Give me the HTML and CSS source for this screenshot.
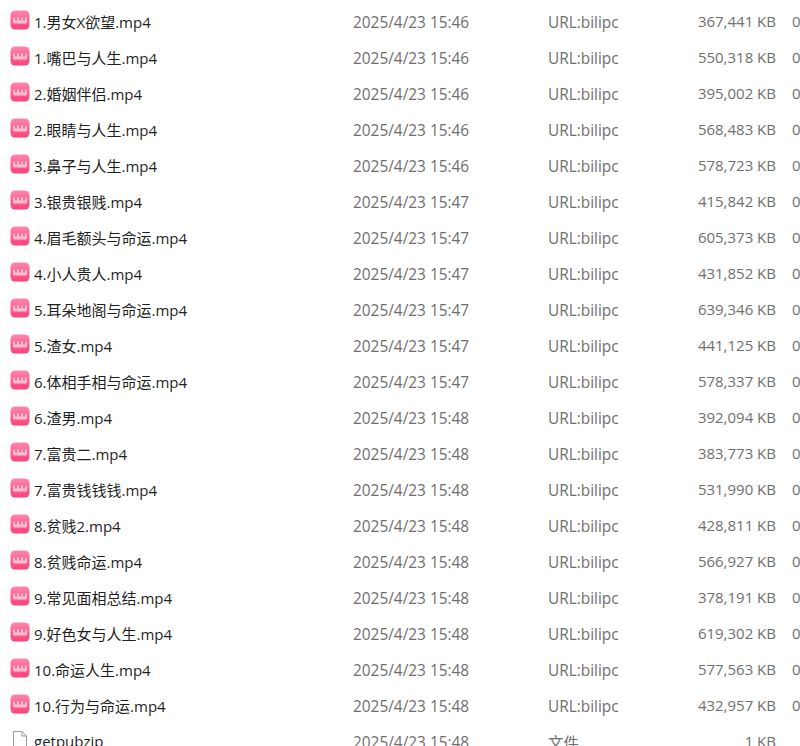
FILE: index.html
```html
<!DOCTYPE html>
<html lang="en">
<head>
    <meta charset="UTF-8">
    <title>Downloads</title>
    <link rel="stylesheet" href="styles.css">
</head>
<body>

<svg class="sprites" width="0" height="0">
    <defs>
        <linearGradient id="pink" x1="0" y1="0" x2="0" y2="1">
            <stop offset="0" stop-color="#ff86ab"/>
            <stop offset="1" stop-color="#fd4078"/>
        </linearGradient>
        <symbol id="video" viewBox="0 0 20 20">
            <rect x="0.5" y="0.5" width="19" height="19" rx="4.5" fill="url(#pink)"/>
            <path d="M3 8q1-1 2 0v2q1 1 2 0V7.5q1-1 2 0V10q1 1 2 0V7.5q1-1 2 0V10q1 1 2 0V8q1-1 2 0v4q0 1.5-1.5 1.5h-11Q3 13.500 3 12z" fill="#ffe4ec" fill-opacity="0.72"/>
        </symbol>
        <symbol id="blank" viewBox="0 0 20 20">
            <path d="M3.500 1.500h8.500l4.500 4.500v13h-13z M12 1.500v4.500h4.500" fill="#fff" stroke="#9a9a9a"/>
        </symbol>
    </defs>
</svg>

<div class="file-list">
    <div class="row"><span class="name"><svg class="icon"><use href="#video"/></svg>1.男女X欲望.mp4</span><span class="date">2025/4/23 15:46</span><span class="type">URL:bilipc</span><span class="size">367,441 KB</span><span class="extra">0</span></div>
    <div class="row"><span class="name"><svg class="icon"><use href="#video"/></svg>1.嘴巴与人生.mp4</span><span class="date">2025/4/23 15:46</span><span class="type">URL:bilipc</span><span class="size">550,318 KB</span><span class="extra">0</span></div>
    <div class="row"><span class="name"><svg class="icon"><use href="#video"/></svg>2.婚姻伴侣.mp4</span><span class="date">2025/4/23 15:46</span><span class="type">URL:bilipc</span><span class="size">395,002 KB</span><span class="extra">0</span></div>
    <div class="row"><span class="name"><svg class="icon"><use href="#video"/></svg>2.眼睛与人生.mp4</span><span class="date">2025/4/23 15:46</span><span class="type">URL:bilipc</span><span class="size">568,483 KB</span><span class="extra">0</span></div>
    <div class="row"><span class="name"><svg class="icon"><use href="#video"/></svg>3.鼻子与人生.mp4</span><span class="date">2025/4/23 15:46</span><span class="type">URL:bilipc</span><span class="size">578,723 KB</span><span class="extra">0</span></div>
    <div class="row"><span class="name"><svg class="icon"><use href="#video"/></svg>3.银贵银贱.mp4</span><span class="date">2025/4/23 15:47</span><span class="type">URL:bilipc</span><span class="size">415,842 KB</span><span class="extra">0</span></div>
    <div class="row"><span class="name"><svg class="icon"><use href="#video"/></svg>4.眉毛额头与命运.mp4</span><span class="date">2025/4/23 15:47</span><span class="type">URL:bilipc</span><span class="size">605,373 KB</span><span class="extra">0</span></div>
    <div class="row"><span class="name"><svg class="icon"><use href="#video"/></svg>4.小人贵人.mp4</span><span class="date">2025/4/23 15:47</span><span class="type">URL:bilipc</span><span class="size">431,852 KB</span><span class="extra">0</span></div>
    <div class="row"><span class="name"><svg class="icon"><use href="#video"/></svg>5.耳朵地阁与命运.mp4</span><span class="date">2025/4/23 15:47</span><span class="type">URL:bilipc</span><span class="size">639,346 KB</span><span class="extra">0</span></div>
    <div class="row"><span class="name"><svg class="icon"><use href="#video"/></svg>5.渣女.mp4</span><span class="date">2025/4/23 15:47</span><span class="type">URL:bilipc</span><span class="size">441,125 KB</span><span class="extra">0</span></div>
    <div class="row"><span class="name"><svg class="icon"><use href="#video"/></svg>6.体相手相与命运.mp4</span><span class="date">2025/4/23 15:47</span><span class="type">URL:bilipc</span><span class="size">578,337 KB</span><span class="extra">0</span></div>
    <div class="row"><span class="name"><svg class="icon"><use href="#video"/></svg>6.渣男.mp4</span><span class="date">2025/4/23 15:48</span><span class="type">URL:bilipc</span><span class="size">392,094 KB</span><span class="extra">0</span></div>
    <div class="row"><span class="name"><svg class="icon"><use href="#video"/></svg>7.富贵二.mp4</span><span class="date">2025/4/23 15:48</span><span class="type">URL:bilipc</span><span class="size">383,773 KB</span><span class="extra">0</span></div>
    <div class="row"><span class="name"><svg class="icon"><use href="#video"/></svg>7.富贵钱钱钱.mp4</span><span class="date">2025/4/23 15:48</span><span class="type">URL:bilipc</span><span class="size">531,990 KB</span><span class="extra">0</span></div>
    <div class="row"><span class="name"><svg class="icon"><use href="#video"/></svg>8.贫贱2.mp4</span><span class="date">2025/4/23 15:48</span><span class="type">URL:bilipc</span><span class="size">428,811 KB</span><span class="extra">0</span></div>
    <div class="row"><span class="name"><svg class="icon"><use href="#video"/></svg>8.贫贱命运.mp4</span><span class="date">2025/4/23 15:48</span><span class="type">URL:bilipc</span><span class="size">566,927 KB</span><span class="extra">0</span></div>
    <div class="row"><span class="name"><svg class="icon"><use href="#video"/></svg>9.常见面相总结.mp4</span><span class="date">2025/4/23 15:48</span><span class="type">URL:bilipc</span><span class="size">378,191 KB</span><span class="extra">0</span></div>
    <div class="row"><span class="name"><svg class="icon"><use href="#video"/></svg>9.好色女与人生.mp4</span><span class="date">2025/4/23 15:48</span><span class="type">URL:bilipc</span><span class="size">619,302 KB</span><span class="extra">0</span></div>
    <div class="row"><span class="name"><svg class="icon"><use href="#video"/></svg>10.命运人生.mp4</span><span class="date">2025/4/23 15:48</span><span class="type">URL:bilipc</span><span class="size">577,563 KB</span><span class="extra">0</span></div>
    <div class="row"><span class="name"><svg class="icon"><use href="#video"/></svg>10.行为与命运.mp4</span><span class="date">2025/4/23 15:48</span><span class="type">URL:bilipc</span><span class="size">432,957 KB</span><span class="extra">0</span></div>
    <div class="row"><span class="name"><svg class="icon"><use href="#blank"/></svg>getpubzip</span><span class="date">2025/4/23 15:48</span><span class="type">文件</span><span class="size">1 KB</span><span class="extra"></span></div>
</div>

</body>
</html>
```

FILE: styles.css
```css
html, body {
    height: 100%;
}

body {
    margin: 0;
    background: #fff;
    overflow: hidden;
    font-family: "Open Sans", "Noto Sans CJK SC", sans-serif;
    font-size: 15px;
    color: #6f6f6f;
}

.sprites {
    display: block;
    height: 0;
}

.file-list {
    padding-top: 3px;
}

.row {
    display: grid;
    grid-template-columns: 353px 195px 130px 98px 24px;
    align-items: center;
    height: 36px;
    white-space: nowrap;
}

.name {
    display: flex;
    align-items: center;
    padding-left: 10px;
    color: #1f1f1f;
}

.icon {
    width: 20px;
    height: 20px;
    margin: -2px 4px 0 0;
    flex: none;
}

.date, .type {
    padding-top: 2px;
    font-size: 15.4px;
}

.size {
    padding-left: 0;
    text-align: right;
}

.extra {
    padding-left: 16px;
}
```
